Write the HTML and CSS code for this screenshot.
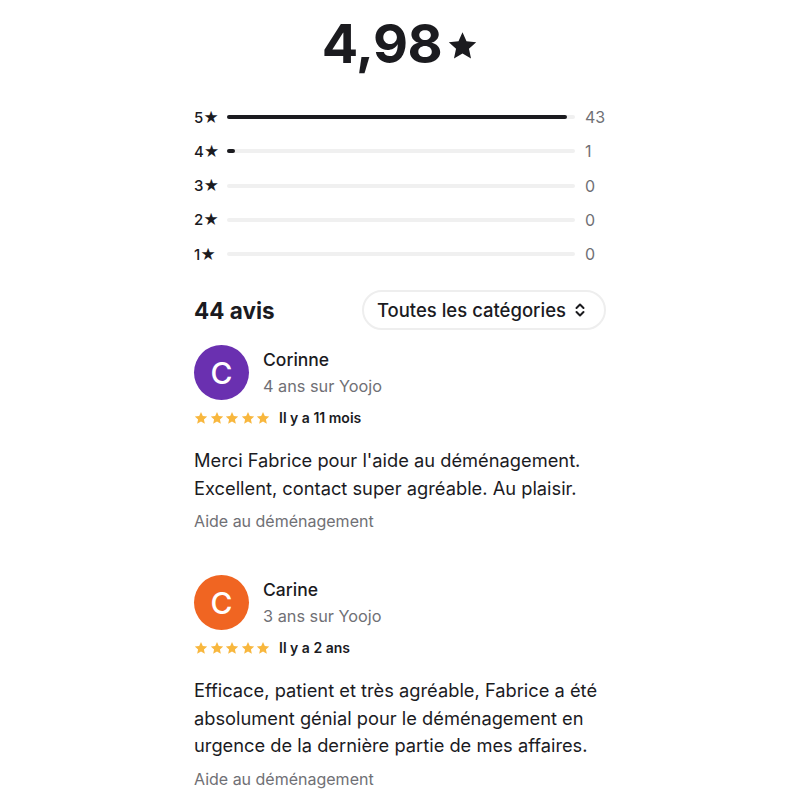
FILE: index.html
```html
<!DOCTYPE html>
<html lang="fr">
<head>
    <meta charset="UTF-8">
    <meta name="viewport" content="width=device-width, initial-scale=1.0">
    <title>Avis</title>
    <link rel="stylesheet" href="styles.css">
</head>
<body>

<svg width="0" height="0" style="position: absolute">
    <symbol id="star" viewBox="0 0 24 24"><path d="M12 1.8l3.1 6.9 7.5.8-5.6 5.1 1.6 7.4L12 18.2 5.4 22l1.6-7.4L1.4 9.5l7.5-.8z"/></symbol>
</svg>

<div class="container">
    <div class="score">
        <span class="score-value">4,98</span>
        <svg class="score-star"><use href="#star"/></svg>
    </div>

    <!-- Distribution -->
    <div class="distribution">
        <div class="dist-row">
            <span class="dist-label">5★</span>
            <div class="dist-track"><div class="dist-fill" style="width: 97.7%"></div></div>
            <span class="dist-count">43</span>
        </div>
        <div class="dist-row">
            <span class="dist-label">4★</span>
            <div class="dist-track"><div class="dist-fill" style="width: 2.3%"></div></div>
            <span class="dist-count">1</span>
        </div>
        <div class="dist-row">
            <span class="dist-label">3★</span>
            <div class="dist-track"><div class="dist-fill" style="width: 0"></div></div>
            <span class="dist-count">0</span>
        </div>
        <div class="dist-row">
            <span class="dist-label">2★</span>
            <div class="dist-track"><div class="dist-fill" style="width: 0"></div></div>
            <span class="dist-count">0</span>
        </div>
        <div class="dist-row">
            <span class="dist-label">1★</span>
            <div class="dist-track"><div class="dist-fill" style="width: 0"></div></div>
            <span class="dist-count">0</span>
        </div>
    </div>

    <div class="reviews-header">
        <h2>44 avis</h2>
        <button class="category-select">
            Toutes les catégories
            <svg viewBox="0 0 12 14"><path d="M2.5 5L6 1.5 9.5 5M2.5 9L6 12.5 9.5 9"/></svg>
        </button>
    </div>

    <div class="review">
        <div class="review-author">
            <div class="avatar purple">C</div>
            <div>
                <div class="author-name">Corinne</div>
                <div class="author-since">4 ans sur Yoojo</div>
            </div>
        </div>
        <div class="review-meta">
            <span class="stars">
                <svg><use href="#star"/></svg><svg><use href="#star"/></svg><svg><use href="#star"/></svg><svg><use href="#star"/></svg><svg><use href="#star"/></svg>
            </span>
            <span class="review-date">Il y a 11 mois</span>
        </div>
        <p class="review-text">Merci Fabrice pour l'aide au déménagement. Excellent, contact super agréable. Au plaisir.</p>
        <div class="review-category">Aide au déménagement</div>
    </div>

    <div class="review">
        <div class="review-author">
            <div class="avatar orange">C</div>
            <div>
                <div class="author-name">Carine</div>
                <div class="author-since">3 ans sur Yoojo</div>
            </div>
        </div>
        <div class="review-meta">
            <span class="stars">
                <svg><use href="#star"/></svg><svg><use href="#star"/></svg><svg><use href="#star"/></svg><svg><use href="#star"/></svg><svg><use href="#star"/></svg>
            </span>
            <span class="review-date">Il y a 2 ans</span>
        </div>
        <p class="review-text">Efficace, patient et très agréable, Fabrice a été absolument génial pour le déménagement en urgence de la dernière partie de mes affaires.</p>
        <div class="review-category">Aide au déménagement</div>
    </div>
</div>

</body>
</html>
```

FILE: styles.css
```css
* {
    margin: 0;
    padding: 0;
    box-sizing: border-box;
}

body {
    font-family: 'Inter', 'Noto Sans', sans-serif;
    background: #fff;
    color: #1b1b1f;
}

.container {
    width: 412px;
    margin: 0 auto;
    padding-top: 10px;
}

.score {
    display: flex;
    justify-content: center;
    align-items: center;
    gap: 5px;
    height: 66px;
    margin-bottom: 2px;
}

.score-value {
    font-size: 54px;
    font-weight: 700;
    letter-spacing: -0.5px;
}

.score-star {
    width: 31px;
    height: 31px;
    fill: #1b1b1f;
    margin-top: 4px;
}

.distribution {
    margin-top: 24px;
}

.dist-row {
    display: flex;
    align-items: center;
    height: 34.25px;
}

.dist-label {
    width: 33px;
    font-size: 15px;
    font-weight: 500;
}

.dist-track {
    flex: 1;
    height: 4px;
    background: #f0f0f0;
    border-radius: 2px;
}

.dist-fill {
    height: 100%;
    background: #1b1b1f;
    border-radius: 2px;
}

.dist-count {
    width: 31px;
    padding-left: 10px;
    font-size: 16px;
    color: #707075;
}

.reviews-header {
    display: flex;
    justify-content: space-between;
    align-items: center;
    margin-top: 19px;
}

.reviews-header h2 {
    font-size: 22.5px;
    font-weight: 700;
}

.category-select {
    display: flex;
    align-items: center;
    gap: 8px;
    height: 40px;
    padding: 0 18px 0 13px;
    font-family: inherit;
    font-size: 18.5px;
    font-weight: 500;
    color: #1b1b1f;
    background: #fff;
    border: 2px solid #eeeeee;
    border-radius: 20px;
}

.category-select svg {
    width: 12px;
    height: 14px;
    fill: none;
    stroke: #1b1b1f;
    stroke-width: 2;
    stroke-linecap: round;
    stroke-linejoin: round;
}

.review {
    margin-top: 15px;
    margin-bottom: 44px;
}

.review-author {
    display: flex;
    align-items: center;
    gap: 14px;
}

.avatar {
    width: 55px;
    height: 55px;
    border-radius: 50%;
    display: flex;
    align-items: center;
    justify-content: center;
    color: #fff;
    font-size: 30px;
    font-weight: 500;
}

.avatar.purple {
    background: #6a30b0;
}

.avatar.orange {
    background: #f06522;
}

.author-name {
    font-size: 17.5px;
    font-weight: 500;
    line-height: 26px;
}

.author-since {
    font-size: 16.3px;
    color: #707075;
    line-height: 26px;
}

.review-meta {
    display: flex;
    align-items: center;
    gap: 9px;
    margin-top: 9px;
}

.stars {
    display: flex;
    gap: 1.5px;
}

.stars svg {
    width: 14px;
    height: 14px;
    fill: #f8b73e;
}

.review-date {
    font-size: 14px;
    font-weight: 600;
}

.review-text {
    margin-top: 21px;
    font-size: 18.3px;
    line-height: 27.5px;
}

.review-category {
    margin-top: 9px;
    font-size: 16px;
    color: #707075;
}
```
